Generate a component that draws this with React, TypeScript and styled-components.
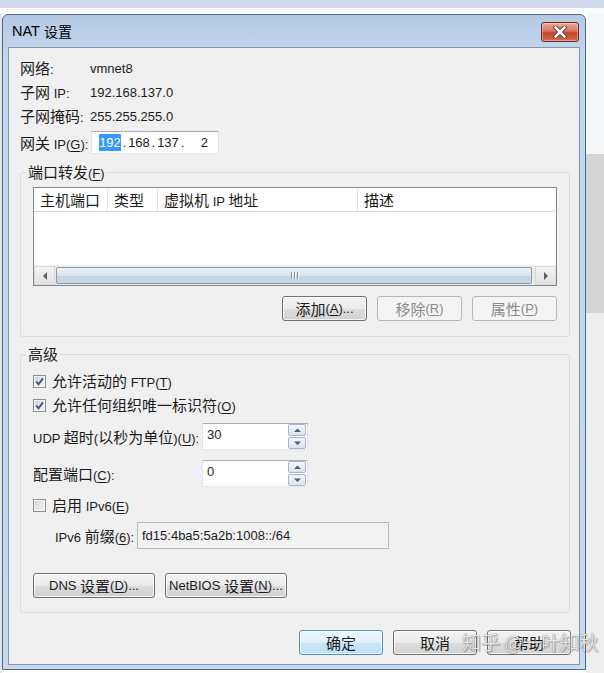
import React from "react";
import styled, { createGlobalStyle } from "styled-components";

const Global = createGlobalStyle`
  html, body { margin: 0; padding: 0; background: #fff; }
  body {
    font-family: "Liberation Sans", "Noto Sans CJK SC", sans-serif;
    font-size: 13px;
    color: #1b1b1b;
  }
  * { box-sizing: border-box; }
`;

const Page = styled.div`
  position: relative;
  width: 604px;
  height: 673px;
  overflow: hidden;
  background: #fff;
  display: flex;
  flex-direction: column;
`;

const TopStrip = styled.div`
  flex: none;
  height: 14px;
  background: linear-gradient(#d4daee 0 8px, #fbfcfe 8px 14px);
`;

const Stage = styled.div`
  flex: 1;
  display: flex;
  min-height: 0;
`;

const LeftSliver = styled.div`
  width: 2px;
  background: #dfe6ef;
`;

const RightStrip = styled.div`
  flex: 1;
  background: linear-gradient(#f5f6f8 0 140px, #d5d5d5 140px 299px, #eeeeee 299px);
`;

const Window = styled.div`
  width: 584px;
  height: 656px;
  border: 1px solid #4f6a86;
  border-radius: 6px 6px 0 0;
  background: linear-gradient(#b3c9e4, #c4d7ee 40px, #c8d9ee);
  padding: 0 5px 4px 5px;
  display: flex;
  flex-direction: column;
`;

const TitleBar = styled.div`
  height: 32px;
  flex: none;
  display: flex;
  align-items: center;
  justify-content: space-between;
  padding: 0 1px 0 4px;
`;

const Title = styled.div`
  font-family: "Liberation Sans", sans-serif;
  font-size: 14.5px;
  color: #000;
  display: flex;
  align-items: center;
  gap: 4px;
`;

const TitleZh = styled.span`
  font-family: "Noto Sans CJK SC", sans-serif;
  font-size: 14px;
`;

const CloseBtn = styled.div`
  width: 38px;
  height: 20px;
  margin-top: 2px;
  border: 1px solid #6d2a1f;
  border-radius: 3px;
  background: linear-gradient(#eaa898 0%, #d9745e 45%, #c4422a 55%, #d66b52 100%);
  box-shadow: inset 0 0 0 1px rgba(255, 255, 255, 0.35);
  display: flex;
  align-items: center;
  justify-content: center;
`;

const Client = styled.div`
  flex: 1;
  background: #f0f0f0;
  border: 1px solid #8496ad;
  padding: 8px 9px 9px 11px;
  display: flex;
  flex-direction: column;
`;

const Zh = styled.span`
  font-family: "Noto Sans CJK SC", sans-serif;
  font-size: 15px;
  line-height: 18px;
`;

const U = styled.span`
  text-decoration: underline;
  text-underline-offset: 2px;
`;

const InfoGrid = styled.div`
  display: grid;
  grid-template-columns: 70px 1fr;
  grid-auto-rows: 24px;
  align-items: center;
`;

const GatewayRow = styled.div`
  margin-top: 3px;
  height: 23px;
  display: flex;
  align-items: center;
`;

const GatewayLabel = styled.span`
  width: 71px;
`;

const IpBox = styled.div`
  width: 128px;
  height: 23px;
  background: #fff;
  border: 1px solid;
  border-color: #abadb3 #dbdfe6 #e3e9ef #e2e3ea;
  display: flex;
  align-items: center;
  padding-left: 7px;
`;

const Seg = styled.span<{ $align?: string }>`
  width: 22px;
  text-align: ${(p) => p.$align || "center"};
`;

const Sel = styled.span`
  background: #3399ff;
  color: #fff;
  padding: 1px 0;
`;

const Dot = styled.span`
  width: 7px;
  text-align: center;
`;

const Group = styled.fieldset<{ $mt: number; $pb: number }>`
  margin: ${(p) => p.$mt}px 0 0 0;
  min-width: 0;
  border: 1px solid #d5dfe5;
  border-radius: 3px;
  padding: 6px 12px ${(p) => p.$pb}px 12px;
`;

const Legend = styled.legend`
  padding: 0 2px;
  margin-left: -7px;
  line-height: 18px;
  height: 18px;
`;

const ListView = styled.div`
  height: 99px;
  border: 1px solid #828790;
  background: #fff;
  display: flex;
  flex-direction: column;
`;

const HeaderRow = styled.div`
  flex: none;
  height: 24px;
  display: grid;
  grid-template-columns: 74px 50px 200px 1fr;
  border-bottom: 1px solid #d5d5d5;
`;

const HeaderCell = styled.div<{ $last?: boolean }>`
  display: flex;
  align-items: center;
  padding-left: 6px;
  border-right: ${(p) => (p.$last ? "none" : "1px solid #e3e3e3")};
  white-space: nowrap;
`;

const ListBody = styled.div`
  flex: 1;
`;

const HScroll = styled.div`
  flex: none;
  height: 20px;
  display: flex;
  background: #eaeaea;
  border-top: 1px solid #f4f4f4;
`;

const ArrowBtn = styled.div`
  width: 21px;
  display: flex;
  align-items: center;
  justify-content: center;
  background: linear-gradient(#f3f3f3, #e4e4e4);
  border: 1px solid #d8d8d8;
`;

const Thumb = styled.div`
  flex: 1;
  margin: 1px 3px 1px 1px;
  border: 1px solid #8d9aaa;
  border-radius: 2px;
  background: linear-gradient(#edf2f7 0%, #d9e4ee 50%, #c6d4e2 51%, #c9d7e4 100%);
  display: flex;
  align-items: center;
  justify-content: center;
  gap: 2px;
`;

const Grip = styled.span`
  width: 1px;
  height: 7px;
  background: #7e90a5;
  box-shadow: 1px 0 0 #f4f8fb;
`;

const ButtonRow = styled.div<{ $mt: number; $mr?: number }>`
  margin-top: ${(p) => p.$mt}px;
  margin-right: ${(p) => p.$mr || 0}px;
  display: flex;
  justify-content: flex-end;
  gap: 10px;
`;

const LeftButtonRow = styled.div<{ $mt: number }>`
  margin-top: ${(p) => p.$mt}px;
  display: flex;
  gap: 10px;
`;

const Btn = styled.div<{ $w: number; $disabled?: boolean; $default?: boolean }>`
  width: ${(p) => p.$w}px;
  height: 25px;
  border-radius: 3px;
  border: 1px solid ${(p) => (p.$disabled ? "#b4b8bb" : p.$default ? "#4f91c4" : "#707070")};
  background: ${(p) =>
    p.$disabled
      ? "#f4f4f4"
      : p.$default
      ? "linear-gradient(#eef7fd 0%, #dff0fb 50%, #c9e6f8 51%, #bfe0f5 100%)"
      : "linear-gradient(#f3f3f3 0%, #ebebeb 50%, #dddddd 51%, #d2d2d2 100%)"};
  box-shadow: ${(p) => (p.$disabled ? "none" : "inset 0 0 0 1px rgba(255,255,255,0.75)")};
  color: ${(p) => (p.$disabled ? "#8a8a8a" : "#1b1b1b")};
  display: flex;
  align-items: center;
  justify-content: center;
  white-space: nowrap;
`;

const CheckRow = styled.div<{ $mt?: number }>`
  margin-top: ${(p) => p.$mt || 0}px;
  height: 24px;
  display: flex;
  align-items: center;
  gap: 6px;
`;

const CheckBox = styled.span`
  width: 13px;
  height: 13px;
  flex: none;
  border: 1px solid #8e8f8f;
  background: linear-gradient(135deg, #cfd3d9, #f7f7f7);
  box-shadow: inset 0 0 0 1px #f4f4f4;
  display: flex;
  align-items: center;
  justify-content: center;
`;

const FieldRow = styled.div<{ $mt: number }>`
  margin-top: ${(p) => p.$mt}px;
  height: 27px;
  display: flex;
  align-items: center;
`;

const FieldLabel = styled.span<{ $w: number; $indent?: number }>`
  width: ${(p) => p.$w}px;
  padding-left: ${(p) => p.$indent || 0}px;
  white-space: nowrap;
`;

const SpinBox = styled.div`
  width: 106px;
  height: 27px;
  background: #fff;
  border: 1px solid;
  border-color: #abadb3 #dbdfe6 #e3e9ef #e2e3ea;
  display: flex;
`;

const SpinText = styled.span`
  flex: 1;
  padding: 3px 0 0 4px;
  line-height: 15px;
`;

const SpinButtons = styled.div`
  width: 18px;
  margin: 0 1px 0 0;
  display: flex;
  flex-direction: column;
  gap: 1px;
`;

const SpinBtn = styled.div`
  flex: 1;
  border: 1px solid #a9b5c5;
  border-radius: 2px;
  background: linear-gradient(#f4f6fa, #dde3ee);
  display: flex;
  align-items: center;
  justify-content: center;
`;

const PrefixField = styled.div`
  width: 252px;
  height: 27px;
  border: 1px solid #b9b9b9;
  background: #f2f2f2;
  display: flex;
  align-items: center;
  padding-left: 4px;
`;

const Watermark = styled.div`
  position: absolute;
  left: 462px;
  top: 630px;
  font-family: "Noto Sans CJK SC", sans-serif;
  font-size: 19px;
  line-height: 24px;
  color: rgba(255, 255, 255, 0.85);
  text-shadow: 0 0 1px rgba(60, 60, 60, 0.8), 1px 1px 1px rgba(0, 0, 0, 0.25);
  white-space: nowrap;
  pointer-events: none;
`;

const Tri = ({ dir, color = "#5f5f5f" }: { dir: "l" | "r" | "u" | "d"; color?: string }) => {
  const d = {
    l: "M5 0 L1 4 L5 8 Z",
    r: "M1 0 L5 4 L1 8 Z",
    u: "M0 4 L3.5 0.5 L7 4 Z",
    d: "M0 0.5 L7 0.5 L3.5 4 Z",
  }[dir];
  const horiz = dir === "l" || dir === "r";
  return (
    <svg width={horiz ? 6 : 7} height={horiz ? 8 : 5} viewBox={horiz ? "0 0 6 8" : "0 0 7 5"}>
      <path d={d} fill={color} />
    </svg>
  );
};

const Check = () => (
  <svg width="9" height="9" viewBox="0 0 9 9">
    <path d="M1.2 4.6 L3.6 7.2 L7.9 1.4" fill="none" stroke="#3f5686" strokeWidth="1.9" />
  </svg>
);

const Spinner = ({ value }: { value: string }) => (
  <SpinBox>
    <SpinText>{value}</SpinText>
    <SpinButtons>
      <SpinBtn>
        <Tri dir="u" color="#4b5f85" />
      </SpinBtn>
      <SpinBtn>
        <Tri dir="d" color="#4b5f85" />
      </SpinBtn>
    </SpinButtons>
  </SpinBox>
);

const headers = [
  <Zh key="a">主机端口</Zh>,
  <Zh key="b">类型</Zh>,
  <span key="c">
    <Zh>虚拟机</Zh> IP <Zh>地址</Zh>
  </span>,
  <Zh key="d">描述</Zh>,
];

export default function App() {
  return (
    <>
      <Global />
      <Page>
        <TopStrip />
        <Stage>
          <LeftSliver />
          <Window>
            <TitleBar>
              <Title>
                NAT<TitleZh>设置</TitleZh>
              </Title>
              <CloseBtn>
                <svg width="14" height="12" viewBox="0 0 14 12">
                  <path d="M2.5 1.5 L11.5 10.5 M11.5 1.5 L2.5 10.5" stroke="#5a2a22" strokeWidth="4.4" strokeLinecap="round" />
                  <path d="M2.5 1.5 L11.5 10.5 M11.5 1.5 L2.5 10.5" stroke="#ffffff" strokeWidth="2.6" strokeLinecap="round" />
                </svg>
              </CloseBtn>
            </TitleBar>
            <Client>
              <InfoGrid>
                <span>
                  <Zh>网络</Zh>:
                </span>
                <span>vmnet8</span>
                <span>
                  <Zh>子网</Zh> IP:
                </span>
                <span>192.168.137.0</span>
                <span>
                  <Zh>子网掩码</Zh>:
                </span>
                <span>255.255.255.0</span>
              </InfoGrid>
              <GatewayRow>
                <GatewayLabel>
                  <Zh>网关</Zh> IP(<U>G</U>):
                </GatewayLabel>
                <IpBox>
                  <Seg>
                    <Sel>192</Sel>
                  </Seg>
                  <Dot>.</Dot>
                  <Seg>168</Seg>
                  <Dot>.</Dot>
                  <Seg>137</Seg>
                  <Dot>.</Dot>
                  <Seg $align="right">2</Seg>
                </IpBox>
              </GatewayRow>

              <Group $mt={9} $pb={15}>
                <Legend>
                  <Zh>端口转发</Zh>(<U>F</U>)
                </Legend>
                <ListView>
                  <HeaderRow>
                    {headers.map((h, i) => (
                      <HeaderCell key={i} $last={i === headers.length - 1}>
                        {h}
                      </HeaderCell>
                    ))}
                  </HeaderRow>
                  <ListBody />
                  <HScroll>
                    <ArrowBtn>
                      <Tri dir="l" />
                    </ArrowBtn>
                    <Thumb>
                      <Grip />
                      <Grip />
                      <Grip />
                    </Thumb>
                    <ArrowBtn>
                      <Tri dir="r" />
                    </ArrowBtn>
                  </HScroll>
                </ListView>
                <ButtonRow $mt={10}>
                  <Btn $w={85}>
                    <Zh>添加</Zh>(<U>A</U>)...
                  </Btn>
                  <Btn $w={85} $disabled>
                    <Zh>移除</Zh>(<U>R</U>)
                  </Btn>
                  <Btn $w={85} $disabled>
                    <Zh>属性</Zh>(<U>P</U>)
                  </Btn>
                </ButtonRow>
              </Group>

              <Group $mt={8} $pb={14}>
                <Legend>
                  <Zh>高级</Zh>
                </Legend>
                <CheckRow>
                  <CheckBox>
                    <Check />
                  </CheckBox>
                  <span>
                    <Zh>允许活动的</Zh> FTP(<U>T</U>)
                  </span>
                </CheckRow>
                <CheckRow>
                  <CheckBox>
                    <Check />
                  </CheckBox>
                  <span>
                    <Zh>允许任何组织唯一标识符</Zh>(<U>O</U>)
                  </span>
                </CheckRow>
                <FieldRow $mt={6}>
                  <FieldLabel $w={169}>
                    UDP <Zh>超时</Zh>(<Zh>以秒为单位</Zh>)(<U>U</U>):
                  </FieldLabel>
                  <Spinner value="30" />
                </FieldRow>
                <FieldRow $mt={10}>
                  <FieldLabel $w={169}>
                    <Zh>配置端口</Zh>(<U>C</U>):
                  </FieldLabel>
                  <Spinner value="0" />
                </FieldRow>
                <CheckRow $mt={6}>
                  <CheckBox />
                  <span>
                    <Zh>启用</Zh> IPv6(<U>E</U>)
                  </span>
                </CheckRow>
                <FieldRow $mt={5}>
                  <FieldLabel $w={104} $indent={22}>
                    IPv6 <Zh>前缀</Zh>(<U>6</U>):
                  </FieldLabel>
                  <PrefixField>fd15:4ba5:5a2b:1008::/64</PrefixField>
                </FieldRow>
                <LeftButtonRow $mt={24}>
                  <Btn $w={122}>
                    DNS&nbsp;<Zh>设置</Zh>(<U>D</U>)...
                  </Btn>
                  <Btn $w={122}>
                    NetBIOS&nbsp;<Zh>设置</Zh>(<U>N</U>)...
                  </Btn>
                </LeftButtonRow>
              </Group>

              <ButtonRow $mt={17} $mr={-1}>
                <Btn $w={84} $default>
                  <Zh>确定</Zh>
                </Btn>
                <Btn $w={84}>
                  <Zh>取消</Zh>
                </Btn>
                <Btn $w={84}>
                  <Zh>帮助</Zh>
                </Btn>
              </ButtonRow>
            </Client>
          </Window>
          <RightStrip />
        </Stage>
        <Watermark>知乎 @一叶知秋</Watermark>
      </Page>
    </>
  );
}
